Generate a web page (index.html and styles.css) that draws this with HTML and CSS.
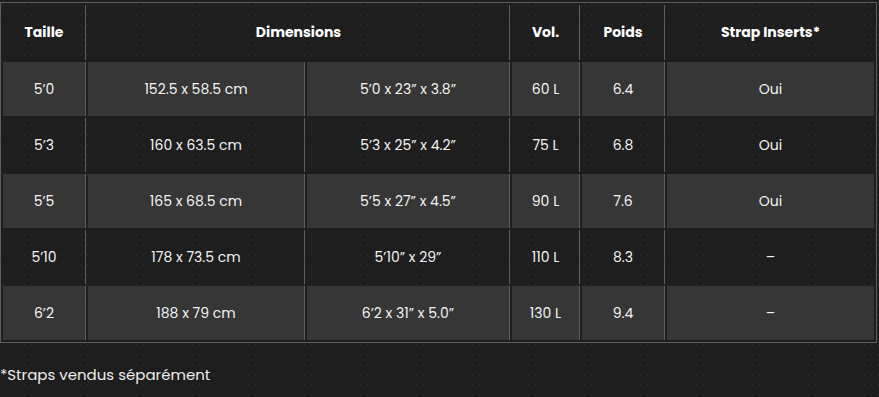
FILE: index.html
```html
<!DOCTYPE html>
<html lang="fr">
<head>
  <meta charset="UTF-8">
  <title>Tailles</title>
  <link rel="stylesheet" href="styles.css">
</head>
<body>

  <!-- Tableau des tailles -->
  <div class="tableau">
    <table>
      <colgroup>
        <col class="c-taille">
        <col class="c-cm">
        <col class="c-pouces">
        <col class="c-vol">
        <col class="c-poids">
        <col>
      </colgroup>
      <thead>
        <tr>
          <th>Taille</th>
          <th colspan="2">Dimensions</th>
          <th>Vol.</th>
          <th>Poids</th>
          <th>Strap Inserts*</th>
        </tr>
      </thead>
      <tbody>
        <tr class="clair">
          <td>5’0</td>
          <td>152.5 x 58.5 cm</td>
          <td>5’0 x 23” x 3.8”</td>
          <td>60 L</td>
          <td>6.4</td>
          <td>Oui</td>
        </tr>
        <tr>
          <td>5’3</td>
          <td>160 x 63.5 cm</td>
          <td>5’3 x 25” x 4.2”</td>
          <td>75 L</td>
          <td>6.8</td>
          <td>Oui</td>
        </tr>
        <tr class="clair">
          <td>5’5</td>
          <td>165 x 68.5 cm</td>
          <td>5’5 x 27” x 4.5”</td>
          <td>90 L</td>
          <td>7.6</td>
          <td>Oui</td>
        </tr>
        <tr>
          <td>5’10</td>
          <td>178 x 73.5 cm</td>
          <td>5’10” x 29”</td>
          <td>110 L</td>
          <td>8.3</td>
          <td>–</td>
        </tr>
        <tr class="clair">
          <td>6’2</td>
          <td>188 x 79 cm</td>
          <td>6’2 x 31” x 5.0”</td>
          <td>130 L</td>
          <td>9.4</td>
          <td>–</td>
        </tr>
      </tbody>
    </table>
  </div>

  <p class="note">*Straps vendus séparément</p>

</body>
</html>
```

FILE: styles.css
```css
* {
  box-sizing: border-box;
  font-family: 'Poppins', 'Inter', sans-serif;
}

body {
  margin: 0;
  padding: 0;
  background-color: #1e1e1e;
  background-image: radial-gradient(circle, #2a2a2a 0.7px, transparent 1.1px);
  background-size: 7px 10px;
  color: #f2f2f2;
  height: 100vh;
}

.tableau {
  padding-top: 2px;
}

table {
  width: 877px;
  table-layout: fixed;
  border: 1px solid #5e5e5e;
  border-spacing: 2px;
}

.c-taille { width: 83px; }
.c-cm { width: 217px; }
.c-pouces { width: 203px; }
.c-vol { width: 68px; }
.c-poids { width: 83px; }

th, td {
  text-align: center;
  vertical-align: middle;
  border-right: 1px solid #5e5e5e;
  padding: 0;
}

th:last-child, td:last-child {
  border-right: none;
}

th {
  height: 55px;
  font-size: 14px;
  font-weight: 700;
  color: #fff;
}

td {
  height: 54px;
  font-size: 14px;
  font-weight: 400;
}

tr.clair td {
  background: #363636;
}

.note {
  margin: 20px 0 0 0;
  font-size: 15px;
  color: #ececec;
}
```
